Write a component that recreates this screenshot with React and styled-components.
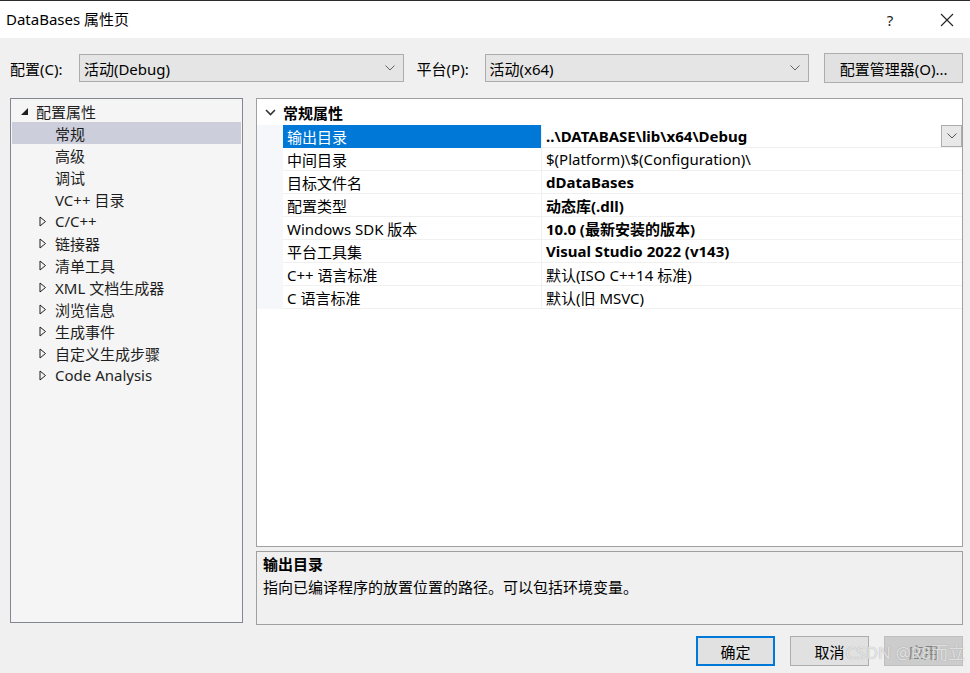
import React from "react";
import styled, { createGlobalStyle } from "styled-components";

const Global = createGlobalStyle`
  html, body { margin: 0; padding: 0; }
  body {
    font-family: "Segoe UI", "Noto Sans", "Noto Sans CJK SC", sans-serif;
    font-size: 15px;
    color: #000;
    background: #f0f0f0;
  }
  * { box-sizing: border-box; }
`;

const Window = styled.div`
  width: 970px;
  height: 673px;
  display: flex;
  flex-direction: column;
  background: #f0f0f0;
  border-top: 1px solid #2b2b2b;
  position: relative;
  overflow: hidden;
`;

const TitleBar = styled.div`
  height: 37px;
  background: #fff;
  display: flex;
  align-items: center;
  padding-left: 6px;
  font-size: 15px;
`;

const TitleText = styled.div`
  flex: 1;
  line-height: 1;
`;

const TitleButton = styled.div`
  width: 46px;
  height: 37px;
  margin-right: ${(p) => p.$mr || 0}px;
  display: flex;
  align-items: center;
  justify-content: center;
  font-size: 15px;
  color: #222;
`;

const Body = styled.div`
  flex: 1;
  display: flex;
  flex-direction: column;
  padding: 15px 7px 0 10px;
`;

const Toolbar = styled.div`
  display: flex;
  align-items: center;
  height: 30px;
`;

const Label = styled.span`
  font-size: 15px;
  width: ${(p) => p.$w}px;
  padding-left: ${(p) => p.$pl || 0}px;
  white-space: nowrap;
`;

const Select = styled.div`
  width: ${(p) => p.$w}px;
  height: 28px;
  background: #e5e5e5;
  border: 1px solid #acacac;
  display: flex;
  align-items: center;
  padding: 0 8px 0 4px;
  font-size: 15px;
`;

const SelectText = styled.span`
  flex: 1;
`;

const Chevron = ({ size = 10, color = "#606060" }) => (
  <svg width={size} height={size * 0.6} viewBox="0 0 10 6">
    <path d="M0.5 0.5 L5 5 L9.5 0.5" fill="none" stroke={color} strokeWidth="1" />
  </svg>
);

const ToolButton = styled.div`
  margin-left: 15px;
  width: 139px;
  height: 30px;
  background: #e1e1e1;
  border: 1px solid #adadad;
  display: flex;
  align-items: center;
  justify-content: center;
  font-size: 15px;
`;

const Main = styled.div`
  display: flex;
  gap: 13px;
  margin-top: 15px;
  height: 527px;
`;

const Tree = styled.div`
  width: 233px;
  height: 525px;
  background: #f5f5f5;
  border: 1px solid #828790;
  padding-top: 1px;
`;

const TreeRow = styled.div`
  height: 22px;
  display: flex;
  align-items: center;
  padding-left: ${(p) => p.$indent}px;
  background: ${(p) => (p.$selected ? "#cccedb" : "transparent")};
  font-size: 15px;
  color: #1e1e1e;
  margin: 0 1px;
`;

const Expander = styled.span`
  width: 16px;
  display: inline-flex;
  align-items: center;
`;

const RightCol = styled.div`
  flex: 1;
  display: flex;
  flex-direction: column;
  gap: 4px;
`;

const Grid = styled.div`
  height: 449px;
  background: #fff;
  border: 1px solid #a0a0a0;
  display: flex;
  flex-direction: column;
`;

const CategoryRow = styled.div`
  height: 26px;
  display: flex;
  align-items: center;
  font-weight: bold;
  font-size: 15px;
`;

const Gutter = styled.div`
  width: 26px;
  align-self: stretch;
  display: flex;
  align-items: center;
  justify-content: center;
  background: ${(p) => (p.$shade ? "#f5f7fa" : "transparent")};
`;

const PropRow = styled.div`
  height: 23px;
  display: flex;
  align-items: stretch;
  font-size: 15px;
`;

const NameCell = styled.div`
  width: 258px;
  display: flex;
  align-items: center;
  padding-left: 4px;
  background: ${(p) => (p.$selected ? "#0078d7" : "#fff")};
  color: ${(p) => (p.$selected ? "#fff" : "#000")};
  border-bottom: 1px solid ${(p) => (p.$selected ? "#0078d7" : "#f0f0f0")};
`;

const ValueCell = styled.div`
  flex: 1;
  display: flex;
  align-items: center;
  padding-left: 4px;
  border-left: 1px solid #f0f0f0;
  border-bottom: 1px solid #f0f0f0;
  font-weight: ${(p) => (p.$bold ? "bold" : "normal")};
  position: relative;
`;

const DropButton = styled.div`
  position: absolute;
  right: 0;
  top: 0;
  width: 21px;
  height: 22px;
  background: #e8e8e8;
  border: 1px solid #adadad;
  display: flex;
  align-items: center;
  justify-content: center;
`;

const Desc = styled.div`
  height: 74px;
  border: 1px solid #a0a0a0;
  background: #f0f0f0;
  padding: 2px 6px;
  display: flex;
  flex-direction: column;
  gap: 3px;
`;

const DescTitle = styled.div`
  font-weight: bold;
  font-size: 15px;
  line-height: 20px;
`;

const DescText = styled.div`
  font-size: 15px;
  line-height: 20px;
`;

const Footer = styled.div`
  display: flex;
  justify-content: flex-end;
  gap: 15px;
  margin-top: 11px;
`;

const Button = styled.div`
  width: 79px;
  height: 30px;
  display: flex;
  align-items: center;
  justify-content: center;
  font-size: 15px;
  background: ${(p) => (p.$disabled ? "#cccccc" : "#e1e1e1")};
  border: ${(p) => (p.$primary ? "2px solid #0078d7" : p.$disabled ? "1px solid #bfbfbf" : "1px solid #adadad")};
  color: ${(p) => (p.$disabled ? "#838383" : "#000")};
`;

const Watermark = styled.div`
  position: absolute;
  right: 5px;
  bottom: 9px;
  font-size: 17px;
  color: rgba(255, 255, 255, 0.7);
  text-shadow: 0 0 1px rgba(120, 120, 120, 0.7);
  pointer-events: none;
`;

const Tri = ({ open }) =>
  open ? (
    <svg width="9" height="9" viewBox="0 0 9 9">
      <path d="M8 1 L8 8 L1 8 Z" fill="#1e1e1e" />
    </svg>
  ) : (
    <svg width="8" height="11" viewBox="0 0 8 11">
      <path d="M1 1 L6.5 5.5 L1 10 Z" fill="none" stroke="#1e1e1e" strokeWidth="1" />
    </svg>
  );

const treeItems = [
  { label: "常规", indent: 43, selected: true },
  { label: "高级", indent: 43 },
  { label: "调试", indent: 43 },
  { label: "VC++ 目录", indent: 43 },
  { label: "C/C++", indent: 27, collapsed: true },
  { label: "链接器", indent: 27, collapsed: true },
  { label: "清单工具", indent: 27, collapsed: true },
  { label: "XML 文档生成器", indent: 27, collapsed: true },
  { label: "浏览信息", indent: 27, collapsed: true },
  { label: "生成事件", indent: 27, collapsed: true },
  { label: "自定义生成步骤", indent: 27, collapsed: true },
  { label: "Code Analysis", indent: 27, collapsed: true },
];

const props = [
  { name: "输出目录", value: "..\\DATABASE\\lib\\x64\\Debug", bold: true, selected: true },
  { name: "中间目录", value: "$(Platform)\\$(Configuration)\\" },
  { name: "目标文件名", value: "dDataBases", bold: true },
  { name: "配置类型", value: "动态库(.dll)", bold: true },
  { name: "Windows SDK 版本", value: "10.0 (最新安装的版本)", bold: true },
  { name: "平台工具集", value: "Visual Studio 2022 (v143)", bold: true },
  { name: "C++ 语言标准", value: "默认(ISO C++14 标准)" },
  { name: "C 语言标准", value: "默认(旧 MSVC)" },
];

export default function App() {
  return (
    <Window>
      <Global />
      <TitleBar>
        <TitleText>DataBases 属性页</TitleText>
        <TitleButton $mr={11}>?</TitleButton>
        <TitleButton>
          <svg width="14" height="14" viewBox="0 0 14 14">
            <path d="M1 1 L13 13 M13 1 L1 13" stroke="#222" strokeWidth="1.1" />
          </svg>
        </TitleButton>
      </TitleBar>
      <Body>
        <Toolbar>
          <Label $w={69}>配置(C):</Label>
          <Select $w={325}>
            <SelectText>活动(Debug)</SelectText>
            <Chevron />
          </Select>
          <Label $w={81} $pl={13}>平台(P):</Label>
          <Select $w={325}>
            <SelectText>活动(x64)</SelectText>
            <Chevron />
          </Select>
          <ToolButton>配置管理器(O)...</ToolButton>
        </Toolbar>
        <Main>
          <Tree>
            <TreeRow $indent={8}>
              <Expander>
                <Tri open />
              </Expander>
              配置属性
            </TreeRow>
            {treeItems.map((it) => (
              <TreeRow key={it.label} $indent={it.indent} $selected={it.selected}>
                {it.collapsed && (
                  <Expander>
                    <Tri />
                  </Expander>
                )}
                {it.label}
              </TreeRow>
            ))}
          </Tree>
          <RightCol>
            <Grid>
              <CategoryRow>
                <Gutter>
                  <svg width="11" height="7" viewBox="0 0 11 7">
                    <path d="M1 1 L5.5 5.5 L10 1" fill="none" stroke="#333" strokeWidth="1.6" />
                  </svg>
                </Gutter>
                常规属性
              </CategoryRow>
              {props.map((p) => (
                <PropRow key={p.name}>
                  <Gutter $shade />
                  <NameCell $selected={p.selected}>{p.name}</NameCell>
                  <ValueCell $bold={p.bold}>
                    {p.value}
                    {p.selected && (
                      <DropButton>
                        <Chevron size={10} color="#555" />
                      </DropButton>
                    )}
                  </ValueCell>
                </PropRow>
              ))}
            </Grid>
            <Desc>
              <DescTitle>输出目录</DescTitle>
              <DescText>指向已编译程序的放置位置的路径。可以包括环境变量。</DescText>
            </Desc>
          </RightCol>
        </Main>
        <Footer>
          <Button $primary>确定</Button>
          <Button>取消</Button>
          <Button $disabled>应用</Button>
        </Footer>
      </Body>
      <Watermark>CSDN @R8而立</Watermark>
    </Window>
  );
}
